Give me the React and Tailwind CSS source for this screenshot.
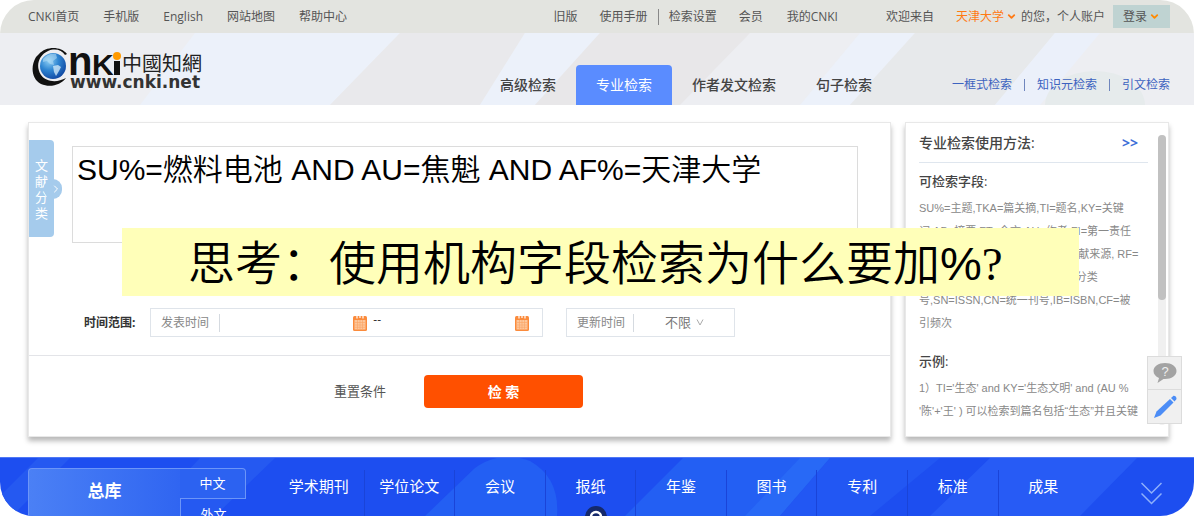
import { ChevronDown, ChevronRight } from 'lucide-react';

const siteLinks = ['CNKI首页', '手机版', 'English', '网站地图', '帮助中心'];

const searchTabs = [
  { name: '高级检索', active: false },
  { name: '专业检索', active: true },
  { name: '作者发文检索', active: false },
  { name: '句子检索', active: false },
];

const fieldLines = [
  'SU%=主题,TKA=篇关摘,TI=题名,KY=关键',
  '词,AB=摘要,FT=全文,AU=作者,FI=第一责任',
  '人,RP=通讯作者,AF=机构,JN=文献来源, RF=',
  '参考文献,YE=年,FU=基金,CLC=分类',
  '号,SN=ISSN,CN=统一刊号,IB=ISBN,CF=被',
  '引频次',
];

const exampleLines = [
  "1）TI='生态' and KY='生态文明' and (AU %",
  "'陈'+'王' ) 可以检索到篇名包括“生态”并且关键",
];

const libraries = ['学术期刊', '学位论文', '会议', '报纸', '年鉴', '图书', '专利', '标准', '成果'];

function Logo() {
  return (
    <svg width="172" height="46" viewBox="0 0 172 46" role="img" aria-label="中国知网">
      <defs>
        <radialGradient id="globe" cx="0.35" cy="0.3" r="0.8">
          <stop offset="0" stopColor="#8fd0f5" />
          <stop offset="0.45" stopColor="#2f86d2" />
          <stop offset="1" stopColor="#0c3f9c" />
        </radialGradient>
      </defs>
      <path
        d="M35 7 C29 -1 14 -1 7 7 L4 10 C-2 20 0 32 9 37 C18 41 29 38 34 31 C25 36 14 35 9 28 C3 19 7 8 16 4 C23 1 30 3 33 8 Z"
        fill="#111"
      />
      <circle cx="21" cy="19" r="13" fill="url(#globe)" />
      <path d="M11 12c4-5 9-6 13-5l1 4-4 3 1 4-4-1-3-3-4 1z" fill="#bfe3f8" opacity="0.5" />
      <path d="M21 19l5-1 3 2-2 4-3 5-2-4z" fill="#d9effb" opacity="0.75" />
      <text x="36" y="28" fontSize="40" fontWeight="900" fontFamily="Liberation Sans, sans-serif" fill="#111">n</text>
      <text x="60" y="28" fontSize="30" fontWeight="900" fontFamily="Liberation Sans, sans-serif" fill="#111">K</text>
      <rect x="82" y="14" width="6" height="14" fill="#111" />
      <circle cx="85" cy="9" r="4" fill="#ff9a00" />
      <text x="90" y="24" fontSize="20" fontFamily="Noto Sans CJK SC, sans-serif" fill="#222">中國知網</text>
      <text x="38" y="41" fontSize="17" fontWeight="700" fontFamily="DejaVu Sans, sans-serif" fill="#333">www.cnki.net</text>
    </svg>
  );
}

function CalendarIcon() {
  return (
    <svg width="14" height="16" viewBox="0 0 14 16" aria-hidden="true">
      <rect x="0" y="1" width="14" height="15" rx="1.5" fill="#fb8b3c" />
      <rect x="1.500" y="5" width="11" height="9.500" fill="#fdc79b" />
      <path d="M2 7.500h10M2 10h10M2 12.300h10M4.500 5v9M7 5v9M9.500 5v9" stroke="#fca565" strokeWidth="0.600" />
      <path d="M4 1v2.500M7 1v2M10 1v2.500" stroke="#fff" strokeWidth="1.200" />
    </svg>
  );
}

function TopBar() {
  return (
    <div className="flex h-[33px] shrink-0 items-center justify-between bg-[#e3e4e0] pl-7 pr-6 text-xs text-[#555]">
      <nav className="flex gap-6">
        {siteLinks.map((link) => (
          <a key={link} href="#">{link}</a>
        ))}
      </nav>
      <div className="flex items-center">
        <nav className="flex items-center">
          <a href="#" className="mr-[22px]">旧版</a>
          <a href="#" className="mr-2.5">使用手册</a>
          <span className="mr-2.5 h-4 w-px bg-[#888]" />
          <a href="#" className="mr-[22px]">检索设置</a>
          <a href="#" className="mr-6">会员</a>
          <a href="#">我的CNKI</a>
        </nav>
        <span className="ml-12">欢迎来自</span>
        <a href="#" className="ml-[22px] flex items-center gap-0.5 text-[#ff7a14]">
          天津大学
          <ChevronDown size={11} strokeWidth={4} />
        </a>
        <span className="ml-1">的您，个人账户</span>
        <button className="ml-2 flex h-[23px] w-[57px] items-center justify-center gap-0.5 bg-[#bfd3d2]">
          登录
          <ChevronDown size={11} strokeWidth={4} className="text-[#ff8a00]" />
        </button>
      </div>
    </div>
  );
}

function Header() {
  return (
    <header className="relative flex h-[72px] shrink-0 items-end justify-between bg-[#edeef2] pl-8 pr-6">
      <svg className="absolute inset-0 h-full w-full" viewBox="0 0 1194 72" preserveAspectRatio="none" aria-hidden="true">
        <path d="M195 0H400L330 72H140z" fill="#ecf1fa" />
        <path d="M400 0H525L480 72H330z" fill="#e9e9ec" />
        <path d="M525 0H600L535 72H480z" fill="#ecf1fa" />
        <path d="M600 0H750L680 72H535z" fill="#e8e7e9" />
        <path d="M860 0H915L850 72H800z" fill="#ecf1fa" />
        <path d="M915 0H1055L995 72H850z" fill="#e7e9eb" />
        <path d="M1055 0H1100L1040 72H995z" fill="#ebf0fa" />
        <path d="M1045 72a50 34 0 0 1 100 0z" fill="#e6ebec" />
      </svg>
      <a href="#" className="relative mb-3">
        <Logo />
      </a>
      <div className="relative flex items-end">
        <nav className="mr-[60px] flex">
          {searchTabs.map((tab) => (
            <a
              key={tab.name}
              href="#"
              className={
                tab.active
                  ? 'flex h-10 items-center rounded-t bg-[#5a8cff] px-5 text-sm text-white'
                  : 'flex h-10 items-center px-5 text-sm font-medium text-[#444]'
              }
            >
              {tab.name}
            </a>
          ))}
        </nav>
        <nav className="flex h-10 items-center gap-3 text-xs text-[#3d63c0]">
          <a href="#">一框式检索</a>
          <span className="h-3 w-px bg-[#6f86bd]" />
          <a href="#">知识元检索</a>
          <span className="h-3 w-px bg-[#6f86bd]" />
          <a href="#">引文检索</a>
        </nav>
      </div>
    </header>
  );
}

function SearchPanel() {
  return (
    <section className="relative min-w-0 flex-1 border border-[#e8e8e8] bg-white shadow-[0_4px_5px_rgba(0,0,0,0.28)]">
      <button className="absolute left-0 top-[17px] flex h-[97px] w-[25px] items-center justify-center rounded-r bg-[#a5cbec] text-[13px] leading-4 text-white">
        <span className="w-[13px]">文献分类</span>
        <span className="absolute -right-2 top-[39px] flex h-5 w-[18px] items-center justify-end rounded-full bg-[#a5cbec]">
          <ChevronRight size={12} strokeWidth={2} />
        </span>
      </button>

      <div className="pl-[43px] pr-8 pt-[23px]">
        <textarea
          aria-label="检索式"
          defaultValue="SU%=燃料电池 AND AU=焦魁 AND AF%=天津大学"
          className="block h-[97px] w-full resize-none border border-[#dcdcdc] bg-white px-1 py-[3px] font-['Liberation_Sans','Noto_Sans_CJK_SC',sans-serif] text-[30px] font-[350] leading-10 text-black"
        />
      </div>

      <div className="mt-[65px] flex items-center pl-[55px]">
        <span className="w-[66px] text-xs font-bold text-[#333]">时间范围:</span>
        <div className="flex h-[29px] w-[393px] items-center border border-[#dfe4ea] pl-2.5 pr-[13px] text-xs text-[#888]">
          <label htmlFor="from" className="pr-2.5">发表时间</label>
          <span className="h-[18px] w-px bg-[#d5dae0]" />
          <input id="from" type="text" className="h-6 w-0 flex-1 outline-none" />
          <CalendarIcon />
          <span className="px-1.5 pb-1.5 text-[#333]">--</span>
          <input aria-label="结束时间" type="text" className="h-6 w-32 outline-none" />
          <CalendarIcon />
        </div>
        <div className="ml-[23px] flex h-[29px] w-[169px] items-center border border-[#dfe4ea] pl-2.5 text-xs text-[#888]">
          <label htmlFor="update" className="pr-2">更新时间</label>
          <span className="h-[18px] w-px bg-[#d5dae0]" />
          <div className="flex flex-1 items-center pl-[31px]">
            <select id="update" className="appearance-none bg-transparent pr-1 text-[13px] text-[#777]">
              <option>不限</option>
            </select>
            <svg width="8" height="7" viewBox="0 0 8 7" fill="none" stroke="#aaa" aria-hidden="true">
              <path d="M1 0.500L4 6L7 0.500" />
            </svg>
          </div>
        </div>
      </div>

      <div className="mt-[18px] flex items-center border-t border-[#e3e4e8] pb-7 pl-[305px] pt-[19px]">
        <button className="w-[90px] text-left text-[13px] text-[#555]">重置条件</button>
        <button className="h-[33px] w-[159px] rounded-sm bg-[#ff5000] text-sm font-bold text-white">检 索</button>
      </div>
    </section>
  );
}

function HelpPanel() {
  return (
    <aside className="relative w-[264px] shrink-0 border border-[#e8e8e8] bg-white pl-[13px] pr-5 shadow-[0_4px_5px_rgba(0,0,0,0.28)]">
      <div className="flex h-10 items-center justify-between border-b border-[#dfe6ee] pr-2.5">
        <h2 className="text-sm font-medium text-[#444]">专业检索使用方法:</h2>
        <a href="#" className="text-sm font-bold text-[#3f6fd8]">&gt;&gt;</a>
      </div>
      <h3 className="mt-1.5 text-[13px] font-medium leading-6 text-[#444]">可检索字段:</h3>
      <div className="mt-1 whitespace-nowrap font-['Liberation_Sans','Noto_Sans_CJK_SC',sans-serif] text-[11px] leading-[23px] text-[#888]">
        {fieldLines.map((line) => (
          <p key={line}>{line}</p>
        ))}
      </div>
      <h3 className="mt-3.5 text-[13px] font-medium leading-6 text-[#444]">示例:</h3>
      <div className="mt-1 whitespace-nowrap font-['Liberation_Sans','Noto_Sans_CJK_SC',sans-serif] text-[11px] leading-[23px] text-[#888]">
        {exampleLines.map((line) => (
          <p key={line}>{line}</p>
        ))}
      </div>

      {/* scrollbar */}
      <div className="absolute right-0.5 top-3 h-[290px] w-2 rounded-full bg-[#f0f0f0]">
        <div className="h-[165px] rounded-full bg-[#c1c1c1]" />
      </div>

      {/* floating service buttons */}
      <div className="absolute -right-3.5 top-[233px] flex w-[35px] flex-col border border-[#dcdcdc] bg-[#f0f0f0]">
        <button aria-label="帮助" className="flex h-[33px] items-center justify-center border-b border-[#dcdcdc]">
          <svg width="24" height="22" viewBox="0 0 24 22" aria-hidden="true">
            <path d="M12 1C5.500 1 0.500 4.500 0.500 9c0 3 2 5.500 5.500 6.900L4.500 21l6-4H12c6.500 0 11.500-3.500 11.500-8S18.500 1 12 1z" fill="#a3a3a3" />
            <text x="12" y="14" textAnchor="middle" fontSize="13" fontFamily="Liberation Sans, sans-serif" fill="#f0f0f0">?</text>
          </svg>
        </button>
        <button aria-label="反馈" className="flex h-[33px] items-center justify-center">
          <svg width="24" height="24" viewBox="0 0 24 24" fill="#4c8df6" aria-hidden="true">
            <path d="M1 23l2.500-6.500L17 4l3.500 3.500L7.500 20.500z" />
            <path d="M18 3l2-1.800c1.500-1.300 4.500 1.500 3.200 3.200L21.500 6.500z" />
          </svg>
        </button>
      </div>
    </aside>
  );
}

function LibraryBar() {
  return (
    <nav className="relative flex min-h-[59px] flex-1 overflow-hidden border-t border-[#4f78f5] bg-[#1d4ef0] pl-7 text-white">
      <svg className="absolute inset-0 h-full w-full" viewBox="0 0 1194 58" preserveAspectRatio="none" aria-hidden="true">
        <path d="M38 0H70L12 58H0V38z" fill="#2559f1" />
        <path d="M200 0H275L215 58H145z" fill="#2559f1" />
        <path d="M425 58L475 10Q500-8 530 3Q560 20 557 58z" fill="#235ff3" />
        <path d="M683 0H830L780 58H625z" fill="#235ff3" />
        <path d="M800 0H830L780 58H745z" fill="#2869f6" />
        <path d="M830 0H940L870 58H780z" fill="#2257f3" />
        <path d="M990 0H1137L1080 58H930z" fill="#275bf5" />
      </svg>

      <div className="relative mt-2.5 flex w-[218px] shrink-0 text-sm">
        <a
          href="#"
          className="flex h-[60px] w-[152px] items-start justify-center rounded-tl border-l border-t border-[#6c95f8] bg-gradient-to-r from-[#4b80f5] to-[#3065f1] pt-2.5 text-[17px] font-bold leading-6"
        >
          总库
        </a>
        <div className="flex flex-1 flex-col text-[13px]">
          <a href="#" className="flex h-[31px] shrink-0 items-center justify-center rounded-tr border-b border-r border-t border-[#6c95f8] bg-[#2c62f1]">
            中文
          </a>
          <a href="#" className="flex h-[31px] shrink-0 items-center justify-center border-l border-[#6c95f8]">
            外文
          </a>
        </div>
      </div>

      <div className="relative ml-7 mt-3 flex flex-1">
        {libraries.map((name) => (
          <a
            key={name}
            href="#"
            className="flex h-14 flex-1 justify-center border-r border-[#1a44d8] pt-1 text-[15px] leading-6 last:border-r-0"
          >
            {name}
          </a>
        ))}
      </div>

      <button aria-label="展开" className="relative flex w-[106px] shrink-0 justify-center pl-5 pt-6">
        <svg width="21" height="23" viewBox="0 0 21 23" fill="none" stroke="#8eb0fb" strokeWidth="1.500" aria-hidden="true">
          <path d="M0.500 1L10.500 11L20.500 1M0.500 11.500L10.500 21.500L20.500 11.500" />
        </svg>
      </button>

      <svg className="absolute -bottom-3 left-1/2 -ml-3" width="22" height="22" viewBox="0 0 22 22" aria-hidden="true">
        <circle cx="11" cy="11" r="11" fill="#15296b" />
        <circle cx="11" cy="11" r="5" fill="none" stroke="#fff" strokeWidth="2.500" />
      </svg>
    </nav>
  );
}

export default function App() {
  return (
    <div className="relative flex h-screen flex-col overflow-hidden rounded-[34px] bg-white font-['Open_Sans','Noto_Sans_CJK_SC',sans-serif]">
      <TopBar />
      <Header />
      <main className="flex shrink-0 gap-3.5 pb-5 pl-7 pr-[25px] pt-[17px]">
        <SearchPanel />
        <HelpPanel />
      </main>
      <LibraryBar />

      {/* highlighted question laid over the page */}
      <div className="absolute left-[122px] right-[115px] top-[228px] flex h-[68px] items-center bg-[#ffffb9] pl-[66px] pt-1 text-black">
        <p className="whitespace-nowrap font-['Liberation_Sans','Noto_Sans_CJK_SC',sans-serif] text-[47px] font-[350] leading-[64px]">
          思考：使用机构字段检索为什么要加%<span className="font-['Liberation_Serif',serif]">?</span>
        </p>
      </div>
    </div>
  );
}
